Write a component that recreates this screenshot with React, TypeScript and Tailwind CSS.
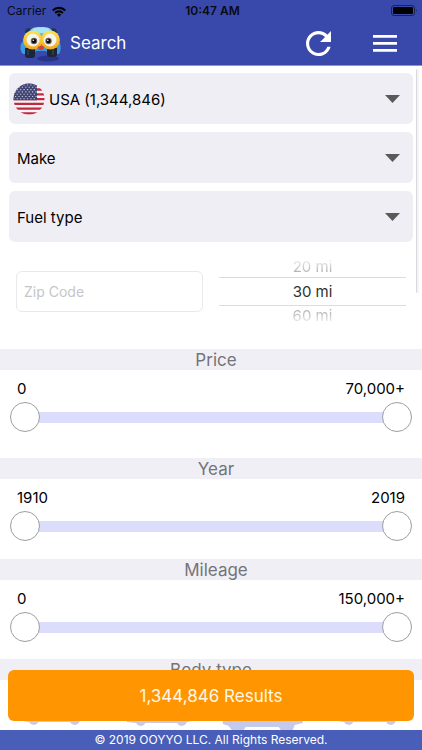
import { useState } from 'react';
import type { ReactNode } from 'react';

type DropdownProps = {
  label: string;
  options: string[];
  icon?: ReactNode;
};

type RangeProps = {
  title: string;
  min: number;
  max: number;
  minLabel: string;
  maxLabel: string;
  className: string;
};

const distances = ['20 mi', '30 mi', '60 mi'];
const canton = [0, 1, 2, 3, 4, 5, 6];

function Logo() {
  return (
    <svg className="h-10 w-[42px] shrink-0" viewBox="0 0 42 40" aria-hidden="true">
      <defs>
        <linearGradient id="paint" x1="0" y1="0" x2="0" y2="1">
          <stop offset="0" stopColor="#8edcf5" />
          <stop offset="0.45" stopColor="#3d9fe0" />
          <stop offset="1" stopColor="#3a9ae4" />
        </linearGradient>
        <linearGradient id="rim" x1="0" y1="0" x2="0" y2="1">
          <stop offset="0" stopColor="#ffe34f" />
          <stop offset="1" stopColor="#f0a71c" />
        </linearGradient>
      </defs>
      <ellipse cx="28" cy="34.500" rx="11" ry="3" fill="#28348c" />
      <path d="M5 8q0-3 3-4 3 0 4 2L6 11zM30 6q1-2 4-2 3 1 3 5l-1 3z" fill="#25344f" />
      <path d="M9 8C11 4 14 3 21 3s10 1 12 5l7 11c1 4 1 8-1 11H28l-2-3H16l-3 3H3c-3-3-3-7-2-10z" fill="url(#paint)" />
      <path d="M13 5c4-2 12-2 16 0l1 4H12z" fill="#a8e5f4" />
      <path d="M5 24h10v7q0 3-3 3H8q-3 0-3-3zM27 24h10v6q0 3-3 3h-4q-3 0-3-3z" fill="#1d2637" />
      <path d="M8 26v5M33 26v5" stroke="#3f4c63" strokeWidth="1" />
      <circle cx="12.700" cy="16" r="9.600" fill="url(#rim)" />
      <circle cx="30.300" cy="16" r="9.600" fill="url(#rim)" />
      <circle cx="13" cy="16" r="6.500" fill="#f4f3ec" />
      <circle cx="30" cy="16" r="6.500" fill="#f4f3ec" />
      <circle cx="14" cy="17" r="3.200" fill="#6b6259" />
      <circle cx="28.500" cy="17" r="3.200" fill="#6b6259" />
      <circle cx="14" cy="17" r="2.200" fill="#0c0c10" />
      <circle cx="28.500" cy="17" r="2.200" fill="#0c0c10" />
      <circle cx="13.300" cy="16.200" r="0.800" fill="#fff" />
      <circle cx="27.800" cy="16.200" r="0.800" fill="#fff" />
      <path d="M17.500 23q4-2 7 0l-1.500 2.500q-2 1.500-4 0z" fill="#e5392a" />
    </svg>
  );
}

function Flag() {
  return (
    <svg className="size-8" viewBox="0 0 32 32" aria-hidden="true">
      <clipPath id="disc"><circle cx="16" cy="16" r="15.5" /></clipPath>
      <g clipPath="url(#disc)">
        <path d="M0 0h32v32H0z" fill="#f8f3f5" />
        <path
          d="M0 1.7h32M0 6.5h32M0 11.3h32M0 16.1h32M0 20.9h32M0 25.7h32M0 30.5h32"
          stroke="#c02a40"
          strokeWidth="2.3"
        />
        <path d="M0 0h24v17.3H0z" fill="#414574" />
        {canton.map((row) => (
          <path
            key={row}
            d={row % 2 ? 'M2 2h22' : 'M0.3 2h23.7'}
            transform={`translate(0 ${row * 2.3})`}
            stroke="#c3c5da"
            strokeWidth="1.1"
            strokeDasharray="1.2 2.2"
          />
        ))}
      </g>
    </svg>
  );
}

function StatusBar() {
  return (
    <div className="grid h-[22px] grid-cols-3 items-center pl-[7px] pr-1 text-xs text-[#080a18]">
      <div className="flex items-center gap-[6px]">
        <span>Carrier</span>
        <svg className="h-[11px] w-[14px]" viewBox="0 0 14 11" aria-label="Wi-Fi">
          <path d="M0 3.7a10 10 0 0 1 14 0l-1.4 1.5a8 8 0 0 0-11.2 0zM2.4 6.2a6.6 6.6 0 0 1 9.2 0l-1.4 1.5a4.6 4.6 0 0 0-6.4 0zM4.8 8.6a3.1 3.1 0 0 1 4.4 0L7 10.9z" />
        </svg>
      </div>
      <span className="text-center font-semibold">10:47 AM</span>
      <svg className="h-3 w-[27px] justify-self-end" viewBox="0 0 27 12" aria-label="Battery full">
        <rect x="0.5" y="0.5" width="23" height="10" rx="2.5" fill="none" stroke="#1b2255" />
        <rect x="2" y="2" width="20" height="7" rx="1" />
        <path d="M25 4q1.5 1.5 0 3z" fill="#1b2255" />
      </svg>
    </div>
  );
}

function Dropdown({ label, options, icon }: DropdownProps) {
  return (
    <div className="relative">
      {icon && <span className="pointer-events-none absolute inset-y-0 left-1 flex items-center">{icon}</span>}
      <select
        aria-label={label}
        className={`block h-[51px] w-full appearance-none rounded-md bg-[#efeef5] pr-10 pt-[3px] text-[15px] text-black ${icon ? 'pl-10' : 'pl-2'}`}
      >
        {options.map((option) => <option key={option}>{option}</option>)}
      </select>
      <span className="pointer-events-none absolute inset-y-0 right-[13px] flex items-center">
        <svg className="h-2 w-[15px]" viewBox="0 0 15 8" aria-hidden="true">
          <path d="M0 0h15L7.5 8z" fill="#595959" />
        </svg>
      </span>
    </div>
  );
}

function DistancePicker() {
  const [distance, setDistance] = useState('30 mi');

  return (
    <div role="radiogroup" aria-label="Distance" className="text-center text-[15px]">
      {distances.map((item) => (
        <label
          key={item}
          className="relative block h-5 leading-5 text-[#b0b0b0] first:mask-t-from-20% last:mask-b-from-20% has-checked:h-[29px] has-checked:border-y has-checked:border-[#dcdcdc] has-checked:leading-[27px] has-checked:text-[#303030]"
        >
          <input
            type="radio"
            name="distance"
            className="absolute inset-0 appearance-none"
            checked={distance === item}
            onChange={() => setDistance(item)}
          />
          {item}
        </label>
      ))}
    </div>
  );
}

const rangeInput =
  'pointer-events-none col-start-1 row-start-1 h-[30px] w-full appearance-none bg-transparent [&::-webkit-slider-thumb]:pointer-events-auto [&::-webkit-slider-thumb]:size-[30px] [&::-webkit-slider-thumb]:appearance-none [&::-webkit-slider-thumb]:rounded-full [&::-webkit-slider-thumb]:border [&::-webkit-slider-thumb]:border-[#9e9e9e] [&::-webkit-slider-thumb]:bg-white';

const sectionTitle = 'h-[21px] bg-[#f0eff5] text-center text-[17px] leading-[23px] text-[#747478]';

function RangeFilter({ title, min, max, minLabel, maxLabel, className }: RangeProps) {
  const [low, setLow] = useState(min);
  const [high, setHigh] = useState(max);

  return (
    <section className={className}>
      <h2 className={`${sectionTitle} pl-[10px]`}>{title}</h2>
      <div className="flex justify-between px-[17px] pt-[9px] text-[15px] leading-5 text-black">
        <span>{low === min ? minLabel : low}</span>
        <span>{high === max ? maxLabel : high}</span>
      </div>
      <div className="mx-[10px] mt-[3px] grid items-center">
        <div className="col-start-1 row-start-1 mx-3 h-[11px] bg-[#dcdcfd]" />
        <input
          type="range"
          aria-label={`${title} from`}
          min={min}
          max={max}
          value={low}
          onChange={(e) => setLow(Math.min(Number(e.target.value), high))}
          className={rangeInput}
        />
        <input
          type="range"
          aria-label={`${title} to`}
          min={min}
          max={max}
          value={high}
          onChange={(e) => setHigh(Math.max(Number(e.target.value), low))}
          className={rangeInput}
        />
      </div>
    </section>
  );
}

function BodyTypes() {
  return (
    <div className="grid grid-cols-4 px-2 pt-[34px]">
      <svg className="h-[22px] w-full" viewBox="0 0 100 22" fill="#c8caec" aria-hidden="true">
        <path d="M14 0h56v7l-4 1H20l-6-1z" />
        <circle cx="25" cy="6" r="5" />
        <circle cx="66" cy="6" r="5" />
      </svg>
      <svg className="h-[22px] w-full" viewBox="0 0 100 22" fill="#c8caec" aria-hidden="true">
        <path d="M16 0h65v7l-8 2H24l-8-1z" />
        <circle cx="30" cy="7" r="5" />
        <circle cx="71" cy="7" r="5" />
      </svg>
      <svg className="h-[22px] w-full" viewBox="0 0 100 22" fill="#c5c9ee" aria-hidden="true">
        <path d="M11 0h80v9l-8 2-2 5H69l-2-3H34l-2 3H20l-3-4-6-2z" />
      </svg>
      <svg className="h-[22px] w-full" viewBox="0 0 100 22" fill="#c8caec" aria-hidden="true">
        <path d="M25 0h57v7l-5 1H30l-5-1z" />
        <circle cx="35" cy="6" r="5" />
        <circle cx="77" cy="6" r="5" />
      </svg>
    </div>
  );
}

export default function App() {
  return (
    <div className="flex h-screen flex-col bg-white font-['Inter','Liberation_Sans',sans-serif]">
      <header className="shrink-0 border-b border-[#8d94cf] bg-[#3949ab]">
        <StatusBar />
        <div className="flex h-[43px] items-center pl-5 pr-[25px]">
          <Logo />
          <h1 className="ml-2 flex-1 text-[17px] text-white">Search</h1>
          <button type="button" aria-label="Refresh" className="mr-[42px] text-white">
            <svg className="block size-[25px]" viewBox="4 4 16 16" aria-hidden="true">
              <path
                d="M17.65 6.35A7.958 7.958 0 0 0 12 4c-4.42 0-7.99 3.58-7.99 8s3.57 8 7.99 8c3.73 0 6.84-2.55 7.73-6h-2.08A5.99 5.99 0 0 1 12 18c-3.31 0-6-2.69-6-6s2.69-6 6-6c1.66 0 3.14.69 4.22 1.78L13 11h7V4l-2.35 2.35z"
                fill="currentColor"
              />
            </svg>
          </button>
          <button type="button" aria-label="Menu" className="text-white">
            <svg className="block h-[17px] w-6" viewBox="0 0 24 17" aria-hidden="true">
              <path d="M0 0h24v2.700H0zM0 7h24v2.700H0zM0 14h24v2.700H0z" fill="currentColor" />
            </svg>
          </button>
        </div>
      </header>

      <div className="relative min-h-0 flex-1">
        <main className="h-full overflow-y-auto [scrollbar-width:none]">
          <form className="pt-[7px]">
            <div className="flex flex-col gap-2 px-[9px]">
              <Dropdown label="Country" options={['USA (1,344,846)']} icon={<Flag />} />
              <Dropdown label="Make" options={['Make']} />
              <Dropdown label="Fuel type" options={['Fuel type']} />
            </div>
            <div className="grid grid-cols-2 items-center gap-4 px-4 pb-[23px] pt-[15px]">
              <input
                type="text"
                aria-label="Zip Code"
                placeholder="Zip Code"
                className="h-[41px] w-full rounded-md border border-[#e9e9ed] px-[7px] text-[14px] placeholder:text-[#c5c5ca]"
              />
              <DistancePicker />
            </div>
            <RangeFilter title="Price" min={0} max={70000} minLabel="0" maxLabel="70,000+" className="pb-[26px]" />
            <RangeFilter title="Year" min={1910} max={2019} minLabel="1910" maxLabel="2019" className="pb-[18px]" />
            <RangeFilter title="Mileage" min={0} max={150000} minLabel="0" maxLabel="150,000+" className="pb-[17px]" />
            <section>
              <h2 className={sectionTitle}>Body type</h2>
              <BodyTypes />
            </section>
          </form>
        </main>
        <div className="pointer-events-none absolute right-[3px] top-[3px] h-[224px] w-[3px] rounded-full border-l border-[#d9d9dc] bg-[#f4f4f6]" />
        <div className="absolute inset-x-2 bottom-[9px]">
          <button type="button" className="block h-[51px] w-full rounded-md bg-[#ff9500] pt-[2px] text-[17px] text-[#fff8e8]">
            1,344,846 Results
          </button>
        </div>
      </div>

      <footer className="h-5 shrink-0 bg-[#485eb9] text-center text-[12px] leading-5 text-white">
        © 2019 OOYYO LLC. All Rights Reserved.
      </footer>
    </div>
  );
}
